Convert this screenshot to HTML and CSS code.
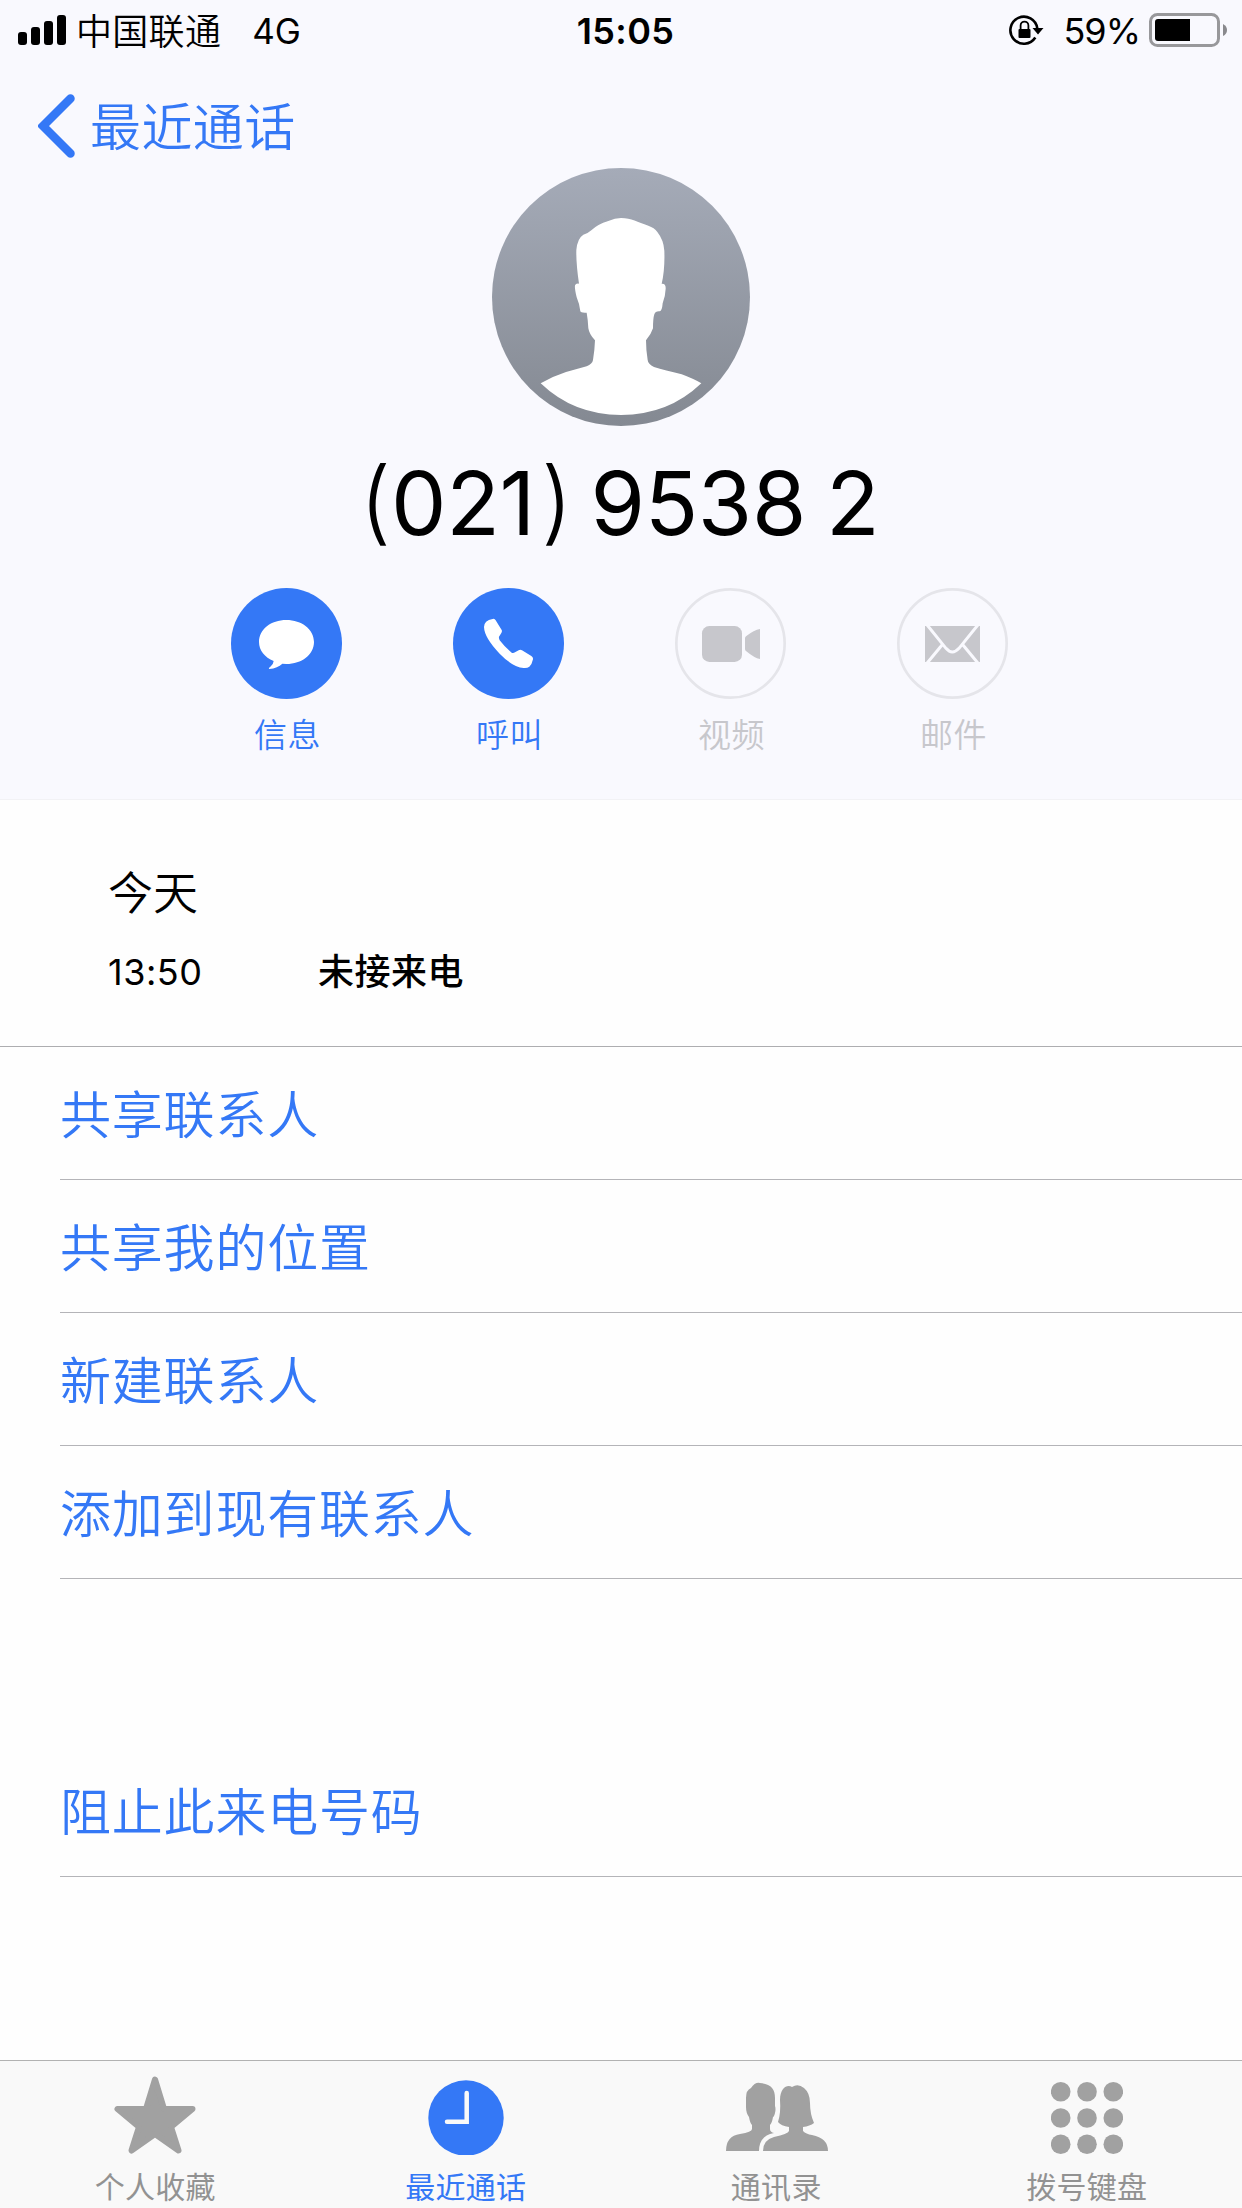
FILE: index.html
```html
<!DOCTYPE html>
<html lang="zh-CN">
<head>
<meta charset="utf-8">
<title>最近通话</title>
<link rel="stylesheet" href="styles.css">
</head>
<body>
<div class="phone">
  <header class="header">
    <div class="status">
      <div class="status-left">
        <svg class="signal" width="48" height="30" viewBox="0 0 48 30"><rect x="0" y="17" width="9" height="13" rx="3"/><rect x="13" y="12" width="9" height="18" rx="3"/><rect x="26" y="6" width="9" height="24" rx="3"/><rect x="39" y="0" width="9" height="30" rx="3"/></svg>
        <span class="carrier">中国联通</span>
        <span class="network">4G</span>
      </div>
      <div class="clock">15:05</div>
      <div class="status-right">
        <svg class="lock" width="36" height="32" viewBox="0 0 36 32"><path d="M26.300 23.500A13.500 13.500 0 1 1 28.300 14.500" fill="none" stroke="#000" stroke-width="2.600"/><path d="M23.500 14H34.500L29 20.500z"/><rect x="9.500" y="15" width="12" height="9" rx="1"/><path d="M11.600 15.500v-4a3.900 3.900 0 0 1 7.800 0v4" fill="none" stroke="#000" stroke-width="1.800"/></svg>
        <span class="percent">59%</span>
        <svg class="battery" width="78" height="34" viewBox="0 0 78 34"><rect x="1.500" y="1.500" width="68" height="31" rx="7" fill="none" stroke="#98989b" stroke-width="3"/><path d="M9 6H41V28H9a3 3 0 0 1-3-3V9a3 3 0 0 1 3-3z"/><path d="M74 11q4 2 4 6t-4 6z" fill="#8a8a8e"/></svg>
      </div>
    </div>
    <a class="back"><svg width="37" height="64" viewBox="0 0 37 64"><path d="M32.500 4.500 5 32 32.500 59.500" fill="none" stroke="#3478f6" stroke-width="8.500" stroke-linecap="round" stroke-linejoin="miter"/></svg><span>最近通话</span></a>
    <svg class="avatar" width="258" height="258" viewBox="36 24 774 774">
      <defs><linearGradient id="shade" x1="0" y1="0" x2="0" y2="1"><stop offset="0" stop-color="#a5abb8"/><stop offset="1" stop-color="#848992"/></linearGradient></defs>
      <circle cx="423" cy="411" r="387" fill="url(#shade)"/>
      <path fill="#fff" d="M423 174C455 174 472 186 505 197Q523 203 532 216Q551 240 553 272Q555 330 545 371Q558 370 557 386Q556 410 548 430Q546 454 539 454Q526 453 523 463Q519 475 519 505Q513 524 498 541Q498 570 503 600Q504 612 522 621Q555 631 605 643Q640 656 664 670Q565 765 423 765Q281 765 182 670Q220 648 258 636L320 619Q337 612 339 600Q344 570 345 541Q328 524 325 505Q324 480 320 458Q302 459 301 454Q298 430 290 412Q282 378 286 374Q290 370 297 371Q288 310 289 270Q292 235 310 224Q326 219 334 211Q352 193 385 183Q405 174 423 174Z"/>
    </svg>
    <h1 class="number"><span><span class="paren">(</span>021<span class="paren close">)</span></span><span>9538</span><span>2</span></h1>
    <div class="actions">
      <div class="action">
        <svg width="111" height="111" viewBox="0 0 333 333"><circle cx="166.500" cy="166.500" r="166.500" fill="#3478f6"/><path fill="#fff" d="M166 96C212 96 249 124 249 162S212 228 166 228L154 227Q140 240 115 243Q111 241 118 236Q127 230 128 219C101 208 84 187 84 162C84 124 120 96 166 96Z"/></svg>
        <span>信息</span>
      </div>
      <div class="action">
        <svg width="111" height="111" viewBox="0 0 333 333"><circle cx="166.500" cy="166.500" r="166.500" fill="#3478f6"/><path fill="#fff" d="M119 93Q125 91 128 97L146 126Q148 130 145 135L138 146Q137 151 140 157Q156 178 176 194Q181 196 186 193L197 187Q202 184 207 187L235 204Q241 208 240 214Q237 229 229 236Q223 241 212 240Q180 238 140 197Q94 149 93 117Q93 98 119 93Z"/></svg>
        <span>呼叫</span>
      </div>
      <div class="action off">
        <svg width="111" height="111" viewBox="0 0 333 333"><circle cx="166.500" cy="166.500" r="162.500" fill="none" stroke="#e5e5ea" stroke-width="8"/><rect x="81" y="114" width="120" height="108" rx="22" fill="#c7c7cc"/><path fill="#c7c7cc" d="M210 151Q210 147 214 144Q237 126 255 123V213Q238 210 213 189Q210 187 210 183Z"/></svg>
        <span>视频</span>
      </div>
      <div class="action off">
        <svg width="111" height="111" viewBox="0 0 333 333"><circle cx="166.500" cy="166.500" r="162.500" fill="none" stroke="#e5e5ea" stroke-width="8"/><rect x="84" y="114" width="165" height="108" fill="#c7c7cc"/><path d="M88 108 147 181Q166 203 186 181L245 108M88 228 135 171M245 228 198 171" fill="none" stroke="#f9f9fe" stroke-width="9"/></svg>
        <span>邮件</span>
      </div>
    </div>
  </header>
  <section class="history">
    <div class="day">今天</div>
    <div class="call"><span class="time">13:50</span><strong>未接来电</strong></div>
  </section>
  <ul class="menu">
    <li>共享联系人</li>
    <li>共享我的位置</li>
    <li>新建联系人</li>
    <li>添加到现有联系人</li>
    <li class="block">阻止此来电号码</li>
  </ul>
  <nav class="tabs">
    <div class="tab">
      <svg width="84" height="80" viewBox="0 0 84 80"><path d="M42 4.500 51 34H79.500L58 52 65.500 75.500 42 59 18.500 75.500 26 52 4.500 34H33Z" fill="#a1a1a1" stroke="#a1a1a1" stroke-width="6" stroke-linejoin="round"/></svg>
      <span>个人收藏</span>
    </div>
    <div class="tab active">
      <svg width="76" height="80" viewBox="0 0 76 80"><circle cx="38" cy="43" r="37.700" fill="#3478f6"/><path d="M38.700 18V46.700H19" fill="none" stroke="#f9f9f9" stroke-width="4.500" stroke-linecap="round"/></svg>
      <span>最近通话</span>
    </div>
    <div class="tab">
      <svg class="people" width="102" height="80" viewBox="0 0 102 80"><path fill="#a1a1a1" d="M34 8C45 9 49 14 49 23V31Q50 34 49 38Q48 42 47 42Q46 48 44 50V54Q44 57 48 58C37 60 33 67 33 76H0Q0 61 14 59Q26 57 26 54V50Q24 48 23 42Q20 38 20 32V23Q20 15 25 13Q29 7 34 8Z"/><path fill="#a1a1a1" d="M54 25C54 12 62 9 66 12Q72 8 78 13Q84 18 84 28Q84 39 88 48Q84 51 77 52V56Q80 59 86 60Q102 63 102 76H37Q37 65 48 62Q62 59 63 56V52Q55 51 52 47Q55 38 54 25Z"/></svg>
      <span>通讯录</span>
    </div>
    <div class="tab">
      <svg width="72" height="80" viewBox="0 0 72 80" fill="#a1a1a1"><circle cx="9.700" cy="16.700" r="9.800"/><circle cx="36" cy="16.700" r="9.800"/><circle cx="62.300" cy="16.700" r="9.800"/><circle cx="9.700" cy="43" r="9.800"/><circle cx="36" cy="43" r="9.800"/><circle cx="62.300" cy="43" r="9.800"/><circle cx="9.700" cy="69.300" r="9.800"/><circle cx="36" cy="69.300" r="9.800"/><circle cx="62.300" cy="69.300" r="9.800"/></svg>
      <span>拨号键盘</span>
    </div>
  </nav>
</div>
</body>
</html>
```
FILE: styles.css
```css
* { box-sizing: border-box; }
body {
  margin: 0;
  background: #fff;
  color: #000;
  font-family: Inter, "Noto Sans CJK SC", sans-serif;
}
.phone {
  width: 1242px;
  height: 2208px;
  display: flex;
  flex-direction: column;
  background: #fefefe;
}
.phone svg { display: block; flex: none; }

.header {
  height: 800px;
  background: #f9f9fe;
  border-bottom: 1px solid #f2f2f5;
  display: flex;
  flex-direction: column;
  align-items: center;
}
.status {
  width: 100%;
  height: 60px;
  display: grid;
  grid-template-columns: 1fr auto 1fr;
  padding: 0 15px 0 18px;
  font-size: 36px;
  line-height: 60px;
}
.status-left, .status-right { display: flex; }
.status-right { justify-content: flex-end; }
.signal { margin-top: 15px; }
.carrier { margin-left: 10px; padding-top: 2px; letter-spacing: .3px; font-weight: 350; }
.network { margin-left: 31px; padding-top: 1px; font-size: 35px; }
.clock { padding-top: 1px; padding-left: 6px; font-size: 36px; font-weight: 600; letter-spacing: .4px; }
.lock { margin-top: 14px; }
.percent { margin: 1px 9px 0 18px; font-size: 36px; letter-spacing: -1px; }
.battery { margin-top: 13px; }

.back {
  align-self: flex-start;
  height: 108px;
  padding: 34px 0 0 38px;
  display: flex;
  gap: 15px;
  color: #3478f6;
  font-size: 51px;
  line-height: 68px;
  letter-spacing: .4px;
  font-weight: 350;
}
.number {
  margin: 23px 0 0;
  padding-right: 3px;
  height: 109px;
  display: flex;
  gap: 20px;
  font-size: 88px;
  line-height: 108px;
  font-weight: 400;
  letter-spacing: -.3px;
}
.paren { font-weight: 350; font-size: 91px; line-height: 1; vertical-align: 2px; }
.close { margin: 0 -2px 0 6px; }
.actions { display: flex; gap: 111px; padding-top: 30px; margin-right: 3px; }
.action {
  width: 111px;
  display: flex;
  flex-direction: column;
  align-items: center;
  gap: 12px;
  color: #3478f6;
  font-size: 33px;
  line-height: 49px;
  font-weight: 350;
  letter-spacing: .5px;
}
.action span { padding-left: 2px; }
.off { color: #c7c7cc; }

.history { height: 247px; padding: 67px 108px 0; border-bottom: 1px solid #adadb0; }
.day { font-size: 45px; line-height: 54px; font-weight: 350; }
.call { display: flex; margin-top: 26px; font-size: 36px; line-height: 50px; }
.time { width: 210px; letter-spacing: .5px; }
.call strong { font-weight: 500; letter-spacing: .5px; }

.menu { flex: 1; margin: 0; padding: 0 0 0 60px; list-style: none; }
.menu li {
  height: 133px;
  border-bottom: 1px solid #b4b4b8;
  color: #3478f6;
  font-size: 51px;
  line-height: 137px;
  letter-spacing: .8px;
  font-weight: 350;
}
.menu .block { margin-top: 165px; }

.tabs {
  height: 148px;
  display: flex;
  background: #f9f9f9;
  border-top: 1px solid #b2b2b2;
}
.tab {
  flex: 1;
  padding-top: 14px;
  display: flex;
  flex-direction: column;
  align-items: center;
  gap: 11px;
  color: #929292;
  font-size: 30px;
  line-height: 42px;
  letter-spacing: .3px;
}
.people { margin-left: 2px; }
.active { color: #3478f6; }
```
